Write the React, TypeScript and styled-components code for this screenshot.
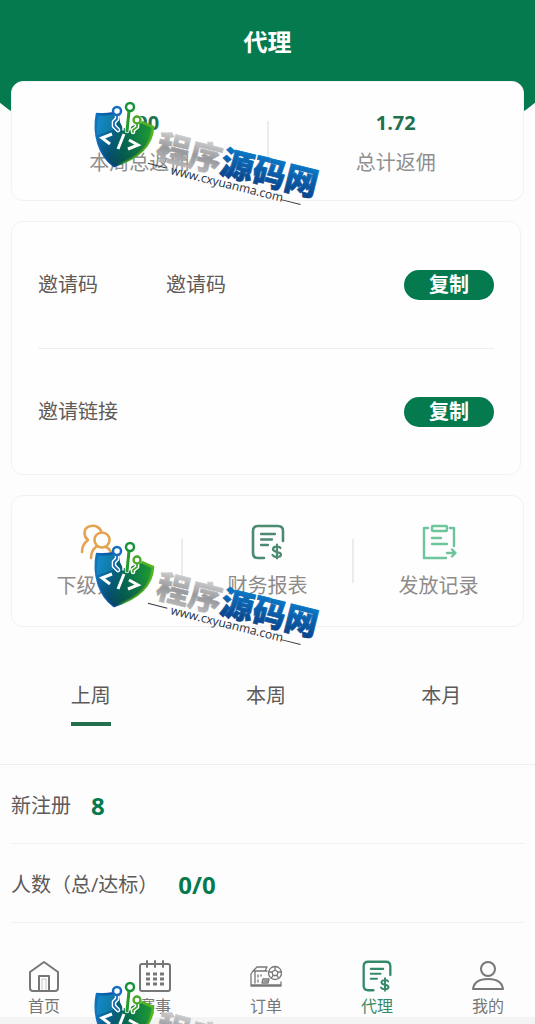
import React, { useId, useState } from 'react';
import styled, { createGlobalStyle } from 'styled-components';

const GREEN = '#057a4e';
const DEEP = '#23704f';

const GlobalStyle = createGlobalStyle`
  * { box-sizing: border-box; }
  body {
    margin: 0;
    background: #fdfdfd;
    color: #5e5a58;
    font-family: "Open Sans", "Noto Sans CJK SC", sans-serif;
    font-size: 20px;
    line-height: 28px;
  }
  button { font: inherit; color: inherit; border: 0; background: none; padding: 0; cursor: pointer; }
  a { color: inherit; text-decoration: none; }
  p, h1, dl, dd { margin: 0; }
`;

const Page = styled.div`
  position: relative;
  min-height: 100vh;
  overflow: hidden;
  display: flex;
  flex-direction: column;
`;

const Header = styled.header`
  height: 166px;
  margin: 0 -20px;
  padding-top: 26px;
  background: ${GREEN};
  border-radius: 0 0 50% 50% / 0 0 100px 100px;
  text-align: center;
`;

const Title = styled.h1`
  color: #fff;
  font-size: 24px;
  line-height: 32px;
  font-weight: 700;
`;

const Main = styled.main`
  flex: 1;
  margin-top: -85px;
`;

const Card = styled.section`
  margin: 0 11px 20px;
  background: #fefefe;
  border: 1px solid #f2f2f2;
  border-radius: 12px;
`;

const Stats = styled(Card)`
  display: flex;
  align-items: center;
  height: 120px;
  padding-top: 4px;
`;

const Stat = styled.div`
  flex: 1;
  display: flex;
  flex-direction: column;
  align-items: center;
  gap: 12px;
  color: #8f8f8f;
`;

const StatValue = styled.strong`
  color: ${DEEP};
  font-size: 20px;
`;

const Rule = styled.span`
  width: 2px;
  height: 44px;
  background: #ececec;
`;

const InviteCard = styled(Card)`
  margin-right: 14px;
  padding: 0 26px;
`;

const InviteRow = styled.div`
  display: flex;
  align-items: center;
  height: 126px;
  & + & { border-top: 1px solid #eeeeee; }
`;

const InviteLabel = styled.span`
  width: 128px;
`;

const InviteValue = styled.span`
  flex: 1;
`;

const CopyButton = styled.button`
  width: 90px;
  height: 30px;
  border-radius: 15px;
  background: ${GREEN};
  color: #fff;
  font-weight: 700;
`;

const Shortcuts = styled(Card)`
  display: flex;
  align-items: center;
  height: 132px;
  margin-bottom: 0;
`;

const Shortcut = styled.a`
  flex: 1;
  display: flex;
  flex-direction: column;
  align-items: center;
  gap: 12px;
  padding-top: 2px;
  color: #8f8b89;
`;

const Tabs = styled.div`
  display: flex;
  height: 138px;
  padding: 55px 6px 0 3px;
  border-bottom: 1px solid #eeeeee;
`;

const Tab = styled.button<{ $active: boolean }>`
  flex: 1;
  display: flex;
  flex-direction: column;
  align-items: center;
  gap: 12px;
  &::after {
    content: "";
    width: 40px;
    height: 4px;
    background: ${(p) => (p.$active ? DEEP : 'transparent')};
  }
`;

const Figures = styled.dl`
  margin: 0 11px;
`;

const Figure = styled.div`
  display: flex;
  align-items: center;
  gap: 20px;
  height: 79px;
  padding-top: 4px;
  border-bottom: 1px solid #f0f0f0;
`;

const FigureValue = styled.dd`
  color: ${GREEN};
  font-size: 24px;
  font-weight: 700;
`;

const Nav = styled.nav`
  display: flex;
  justify-content: space-between;
  padding: 0 25px 1px 22px;
  border-bottom: 7px solid #f4f4f4;
`;

const NavLink = styled.a<{ $active?: boolean }>`
  width: 44px;
  display: flex;
  flex-direction: column;
  align-items: center;
  gap: 4px;
  color: ${(p) => (p.$active ? '#348a68' : '#777777')};
  font-size: 16px;
  line-height: 20px;
  white-space: nowrap;
`;

const Mark = styled.svg<{ $top: number }>`
  position: absolute;
  left: 85px;
  top: ${(p) => p.$top}px;
  pointer-events: none;
`;

const line = { fill: 'none', stroke: 'currentColor', strokeWidth: 2, strokeLinecap: 'round', strokeLinejoin: 'round' } as const;

const PeopleIcon = () => (
  <svg width="36" height="36" viewBox="0 0 36 36" {...line} stroke="#e3a350" strokeWidth="2.6" aria-hidden="true">
    <path d="M9 16C4 12 4 3 12 2c5-1 9 2 10 5M9 16c-4 3-6 6-6 12" />
    <circle cx="23" cy="16" r="7.500" />
    <path d="M18 22c-4 3-6 6-6 12M27 23c4 2 6 5 6 11" />
  </svg>
);

const ReportIcon = ({ size, color }: { size: number; color: string }) => (
  <svg width={size} height={size} viewBox="0 0 36 36" {...line} stroke={color} strokeWidth="2.6" aria-hidden="true">
    <path d="M14 34H8q-5 0-5-5V7q0-5 5-5h20q5 0 5 5v10" />
    <path d="M11 10h14M11 15.500h11M11 21h7" strokeWidth="2.300" />
    <path d="M30.500 24c-1-2-7.500-2-7.500 1.200 0 3.600 8 1.800 8 5.300 0 3.300-7 3.200-8.500.5M27 20.500v14" strokeWidth="2.200" />
  </svg>
);

const RecordIcon = () => (
  <svg width="36" height="36" viewBox="0 0 36 36" {...line} stroke="#6fc59b" strokeWidth="2.400" aria-hidden="true">
    <path d="M7 4H3v30h22M29 4h4v18" />
    <rect x="11" y="2" width="15" height="5" rx="1" />
    <path d="M11 14h9M11 20h15M26 29h8M31 25.500l3.500 3.500-3.500 3.500" />
  </svg>
);

const HomeIcon = () => (
  <svg width="32" height="32" viewBox="0 0 32 32" {...line} aria-hidden="true">
    <path d="M2 12 16 2l14 10v16q0 3-3 3H5q-3 0-3-3zM11 31V16h10v15" />
    <path d="M14 31V19h4v12" strokeWidth="1" opacity=".4" />
  </svg>
);

const CalendarIcon = () => (
  <svg width="32" height="32" viewBox="0 0 32 32" {...line} aria-hidden="true">
    <rect x="1" y="4" width="30" height="27" rx="2" />
    <path d="M8 1v6M16 1v6M24 1v6" />
    <path d="M7 14h4M14 14h4M21 14h4M7 19h4M14 19h4M21 19h4M7 24h4M14 24h4M21 24h4" strokeWidth="3" strokeLinecap="butt" />
  </svg>
);

const OrderIcon = () => (
  <svg width="32" height="32" viewBox="0 0 32 32" {...line} strokeWidth="1.300" aria-hidden="true">
    <path d="M5 11H3l-2 3v12h30v-4M1 25h30M5 11v12M5 11h12M3 11l4-4h10l-2 4M8 15v2M8 20v2M11 15v1M12 23l1-4h6l-1 4zM14 21h4" />
    <circle cx="25" cy="13" r="6.500" />
    <path d="m25 10 3 2-1 3.500h-4L22 12zM25 6.500V10M31 12l-3 0M28.500 18 27 15.500M21.500 18l1.500-2.500M19 12h3" />
  </svg>
);

const PersonIcon = () => (
  <svg width="32" height="32" viewBox="0 0 32 32" {...line} aria-hidden="true">
    <circle cx="16" cy="9" r="7" />
    <path d="M1 29c1-7 7-10 15-10s14 3 15 10z" />
  </svg>
);

/* Site stamp: circuit shield, tilted name and address. */
function Watermark({ top }: { top: number }) {
  const id = useId().replace(/[^a-zA-Z0-9]/g, '');
  return (
    <Mark $top={top} width="244" height="118" viewBox="0 0 244 118" aria-hidden="true">
      <defs>
        <linearGradient id={`s${id}`} x1="0" y1="0" x2="1" y2="0.200">
          <stop offset="0" stopColor="#0a7fc6" />
          <stop offset="0.400" stopColor="#075d7c" />
          <stop offset="0.620" stopColor="#06704e" />
          <stop offset="1" stopColor="#1f9a32" />
        </linearGradient>
        <linearGradient id={`d${id}`} x1="0" y1="0" x2="0" y2="1">
          <stop offset="0.450" stopColor="#04354f" stopOpacity="0" />
          <stop offset="1" stopColor="#04354f" stopOpacity="0.550" />
        </linearGradient>
        <linearGradient id={`e${id}`} x1="0" y1="0" x2="1" y2="0">
          <stop offset="0" stopColor="#1272c0" />
          <stop offset="0.350" stopColor="#0a4d99" />
          <stop offset="0.500" stopColor="#3fa62a" />
          <stop offset="1" stopColor="#55b51f" />
        </linearGradient>
        <linearGradient id={`g${id}`} x1="0" y1="0" x2="0" y2="1">
          <stop offset="0.200" stopColor="#cfcfd1" />
          <stop offset="0.550" stopColor="#98999c" />
          <stop offset="1" stopColor="#c4c4c6" />
        </linearGradient>
        <linearGradient id={`b${id}`} x1="0" y1="0" x2="0" y2="1">
          <stop offset="0.200" stopColor="#0b78c6" />
          <stop offset="0.900" stopColor="#0a3f88" />
        </linearGradient>
      </defs>
      <path d="M12 19C20 20 28 19 35 16L54 26 68 32C67 52 51 64 29 71 14 60 8 39 12 19Z" fill={`url(#s${id})`} stroke={`url(#e${id})`} strokeWidth="2.600" strokeLinejoin="round" />
      <path d="M12 19C20 20 28 19 35 16L54 26 68 32C67 52 51 64 29 71 14 60 8 39 12 19Z" fill={`url(#d${id})`} />
      <path d="M14 21c7 0 10-1 15-2l-1 16-16 5c-1-7 0-13 2-19Z" fill="#27aee6" opacity=".3" />
      <path d="M33 12 58 23 56 28 47 31 45 34 38 33 35 27Z" fill="#fefefe" />
      <g fill="none" strokeLinecap="round" strokeLinejoin="round">
        <g stroke="#fff" strokeWidth="4.600">
          <path d="M32 20v4l-3 3v4l4 4M44 16l-2 20M52 29v3l-4 3v2" />
        </g>
        <path d="M32 20v4l-3 3v4l4 4" stroke="#146cbc" strokeWidth="1.800" />
        <path d="M36 22v5l2 4v4M48 25v4l-3 2v4" stroke="#fff" strokeWidth="1.500" />
        <path d="M44 16l-2 20" stroke="#279a2c" strokeWidth="3" />
        <path d="M52 29v3l-4 3v2" stroke="#48a925" strokeWidth="1.800" />
        <circle cx="32" cy="16" r="4" fill="#fff" stroke="#146cbc" strokeWidth="2.500" />
        <circle cx="45" cy="12" r="4" fill="#fff" stroke="#169337" strokeWidth="2.500" />
        <circle cx="52" cy="25" r="3.500" fill="#fff" stroke="#48a925" strokeWidth="2.300" />
      </g>
      <path d="M27 39 17 43l8 6M44 45l9 5-10 4M39 39l-6 15" fill="none" stroke="#fff" strokeWidth="3" />
      <g transform="translate(70 60) rotate(14)" fontFamily="Noto Sans CJK SC, sans-serif" fontWeight="900" fontSize="33">
        <text x="0" y="2" fill={`url(#g${id})`} stroke={`url(#g${id})`} strokeWidth="0.600">程序</text>
        <text x="66" y="2" fill={`url(#b${id})`} stroke={`url(#b${id})`} strokeWidth="0.800">源码网</text>
      </g>
      <g transform="translate(85 79) rotate(14)">
        <text x="0" y="0" fontFamily="Open Sans, sans-serif" fontSize="12" fill="#242f3b">www.cxyuanma.com</text>
        <path d="M-24-5h20M114-2h20" stroke="#333a42" strokeWidth="1" />
      </g>
    </Mark>
  );
}

const periods = ['上周', '本周', '本月'];

export default function App() {
  const [period, setPeriod] = useState('上周');
  return (
    <Page>
      <GlobalStyle />
      <Header>
        <Title>代理</Title>
      </Header>
      <Main>
        <Stats>
          <Stat>
            <StatValue>0.00</StatValue>
            <span>本周总返佣</span>
          </Stat>
          <Rule />
          <Stat>
            <StatValue>1.72</StatValue>
            <span>总计返佣</span>
          </Stat>
        </Stats>
        <InviteCard>
          <InviteRow>
            <InviteLabel>邀请码</InviteLabel>
            <InviteValue>邀请码</InviteValue>
            <CopyButton type="button">复制</CopyButton>
          </InviteRow>
          <InviteRow>
            <InviteLabel>邀请链接</InviteLabel>
            <InviteValue />
            <CopyButton type="button">复制</CopyButton>
          </InviteRow>
        </InviteCard>
        <Shortcuts>
          <Shortcut href="#team">
            <PeopleIcon />
            <span>下级列表</span>
          </Shortcut>
          <Rule />
          <Shortcut href="#finance">
            <ReportIcon size={36} color="#4b8b72" />
            <span>财务报表</span>
          </Shortcut>
          <Rule />
          <Shortcut href="#records">
            <RecordIcon />
            <span>发放记录</span>
          </Shortcut>
        </Shortcuts>
        <Tabs role="tablist">
          {periods.map((name) => (
            <Tab
              key={name}
              type="button"
              role="tab"
              aria-selected={name === period}
              $active={name === period}
              onClick={() => setPeriod(name)}
            >
              {name}
            </Tab>
          ))}
        </Tabs>
        <Figures>
          <Figure>
            <dt>新注册</dt>
            <FigureValue>8</FigureValue>
          </Figure>
          <Figure>
            <dt>人数（总/达标）</dt>
            <FigureValue>0/0</FigureValue>
          </Figure>
        </Figures>
      </Main>
      <Nav>
        <NavLink href="#home"><HomeIcon />首页</NavLink>
        <NavLink href="#matches"><CalendarIcon />赛事</NavLink>
        <NavLink href="#orders"><OrderIcon />订单</NavLink>
        <NavLink href="#agent" $active aria-current="page"><ReportIcon size={32} color="#348a68" />代理</NavLink>
        <NavLink href="#me"><PersonIcon />我的</NavLink>
      </Nav>
      <Watermark top={95} />
      <Watermark top={535} />
      <Watermark top={975} />
    </Page>
  );
}
